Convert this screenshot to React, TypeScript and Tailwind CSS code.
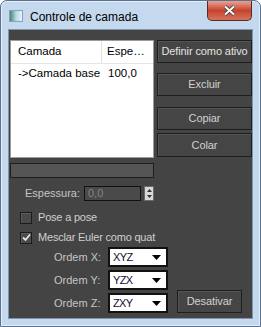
const font = { fontFamily: '"Liberation Sans", Arial, sans-serif' }

function Btn({ label, className = '' }: { label: string; className?: string }) {
  return (
    <div
      className={`flex items-center justify-center whitespace-nowrap border border-[#1e1e1e] bg-[#454545] text-[11px] tracking-[-0.1px] text-[#d2d2d2] shadow-[inset_1px_1px_0_#555] ${className}`}
    >
      {label}
    </div>
  )
}

function Check({ label, checked }: { label: string; checked?: boolean }) {
  return (
    <div className="flex items-center gap-[6px] h-[13px]">
      <div className="w-[12px] h-[12px] border border-[#1c1c1c] bg-[#4a4a4a] shadow-[inset_1px_1px_0_#5c5c5c] flex items-center justify-center">
        {checked && (
          <svg width="9" height="9" viewBox="0 0 9 9">
            <path d="M1 4.5 L3.5 7 L8 1.5" stroke="#e6e6e6" strokeWidth="1.8" fill="none" />
          </svg>
        )}
      </div>
      <span className="text-[11px] tracking-[-0.2px] text-[#cfcfcf] whitespace-nowrap">{label}</span>
    </div>
  )
}

function Order({ label, value, children }: { label: string; value: string; children?: React.ReactNode }) {
  return (
    <div className="flex items-center h-[20px]">
      <span className="w-[54px] ml-[44px] text-[11px] text-[#c4c4c4]">{label}</span>
      <div className="w-[60px] h-[20px] bg-white border-2 border-[#111] flex items-center pl-[3px] pr-[5px]">
        <span className="text-[11px] tracking-[-0.6px] text-[#101030]">{value}</span>
        <svg className="ml-auto" width="9" height="5" viewBox="0 0 9 5">
          <path d="M0 0 H9 L4.5 5 Z" fill="#000" />
        </svg>
      </div>
      {children}
    </div>
  )
}

export default function App() {
  return (
    <div style={font} className="w-[261px] h-[327px] flex flex-col bg-[#c4d8ee] border border-[#5a7190] rounded-t-[7px] shadow-[inset_0_0_0_1px_#e4eefa]">
      {/* title bar */}
      <div className="h-[28px] flex items-start">
        <div className="mt-[9px] ml-[8px] w-[14px] h-[12px] border border-[#8aa0b8] bg-gradient-to-r from-[#3e8a6e] via-[#b8d6ea] to-[#e9f2fa]" />
        <span className="ml-[7px] mt-[7px] text-[12px] text-black">Controle de camada</span>
        <div className="ml-auto mr-[8px] w-[45px] h-[20px] rounded-b-[5px] border border-t-0 border-[#5a2a24] bg-gradient-to-b from-[#e8a293] via-[#c7422d] to-[#d6735b] flex items-center justify-center">
          <svg width="13" height="11" viewBox="0 0 13 11">
            <path d="M2 1.5 L11 9.5 M11 1.5 L2 9.5" stroke="#3b3b3b" strokeWidth="3.6" />
            <path d="M2 1.5 L11 9.5 M11 1.5 L2 9.5" stroke="#ffffff" strokeWidth="2" />
          </svg>
        </div>
      </div>

      {/* client area */}
      <div className="mx-[7px] h-[290px] bg-[#444444] border border-[#7f95ae] pl-[1px] pt-[10px] flex flex-col">
        <div className="flex gap-[3px]">
          <div className="w-[144px] h-[118px] border border-[#9c9c9c] bg-white flex flex-col text-[11.5px] text-black">
            <div className="h-[23px] flex items-center border-b border-[#e5e5e5]">
              <span className="w-[91px] pl-[7px] border-r border-[#e0e0e0] h-full flex items-center">Camada</span>
              <span className="pl-[5px]">Espe…</span>
            </div>
            <div className="h-[20px] flex items-center">
              <span className="w-[91px] pl-[7px] whitespace-nowrap">-&gt;Camada base</span>
              <span className="pl-[6px]">100,0</span>
            </div>
          </div>
          <div className="flex flex-col w-[95px]">
            <Btn label="Definir como ativo" className="h-[23px] text-[#e2e2e2]" />
            <Btn label="Excluir" className="h-[23px] mt-[10px]" />
            <Btn label="Copiar" className="h-[23px] mt-[11px]" />
            <Btn label="Colar" className="h-[24px] mt-[3px]" />
          </div>
        </div>

        <div className="mt-[5px] w-[144px] h-[15px] border border-[#1e1e1e] bg-[#555555]" />

        <div className="mt-[8px] w-[144px] flex items-center h-[15px]">
          <span className="ml-[15px] text-[11px] text-[#c4c4c4]">Espessura:</span>
          <div className="ml-auto w-[57px] h-[15px] border border-[#111] bg-[#4a4a4a] flex items-center pl-[3px]">
            <span className="text-[11px] text-[#858585]">0,0</span>
          </div>
          <div className="ml-[3px] w-[10px] h-[15px] border border-[#6a6a6a] bg-[#d8d8d8] flex flex-col items-center justify-center">
            <svg width="5" height="11" viewBox="0 0 5 11">
              <path d="M0 4 L2.5 1 L5 4 Z M0 7 L2.5 10 L5 7 Z" fill="#333" />
            </svg>
          </div>
        </div>

        <div className="mt-[10px] ml-[10px] flex flex-col gap-[7px]">
          <Check label="Pose a pose" />
          <Check label="Mesclar Euler como quat" checked />
        </div>

        <div className="mt-[3px] flex flex-col gap-[3px]">
          <Order label="Ordem X:" value="XYZ" />
          <Order label="Ordem Y:" value="YZX" />
          <Order label="Ordem Z:" value="ZXY">
            <Btn label="Desativar" className="ml-[9px] w-[65px] h-[23px] -mt-[4px]" />
          </Order>
        </div>
      </div>
    </div>
  )
}
